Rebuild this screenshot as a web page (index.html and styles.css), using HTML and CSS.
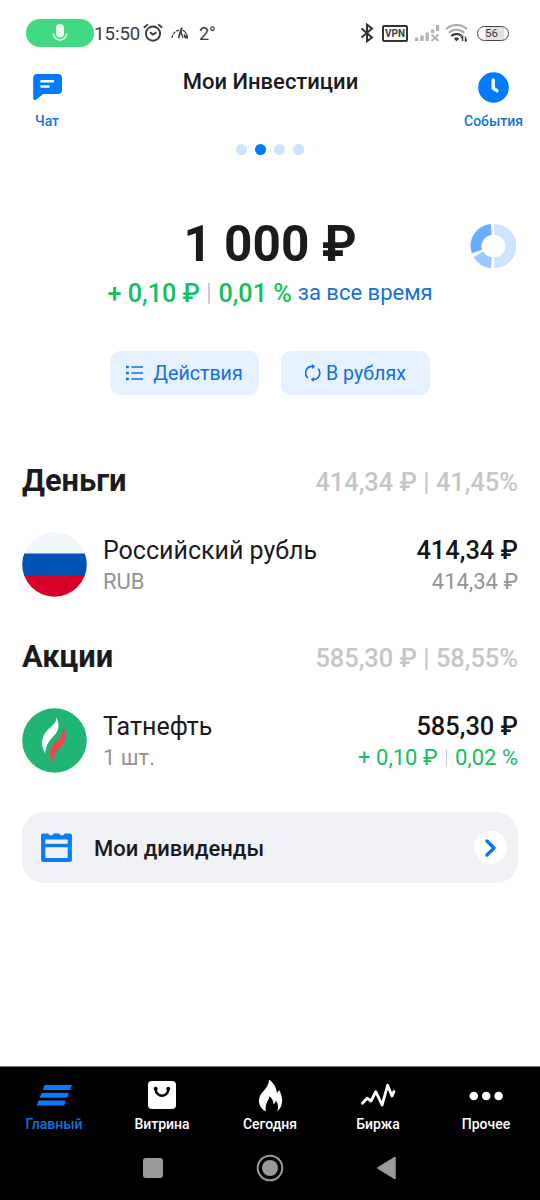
FILE: index.html
```html
<!DOCTYPE html>
<html lang="ru">
<head>
<meta charset="utf-8">
<title>Мои Инвестиции</title>
<link rel="stylesheet" href="styles.css">
</head>
<body>
<div class="screen">
  <div class="status">
    <div class="mic">
      <svg width="16" height="18" viewBox="0 0 16 18"><rect x="4" y="0" width="8" height="13.5" rx="4" fill="#e6f7ec"/><path d="M1.500 9.500a6.500 6.500 0 0 0 13 0" fill="none" stroke="#e6f7ec" stroke-width="1.600"/></svg>
    </div>
    <span class="time">15:50</span>
    <svg class="alarm" width="20" height="20" viewBox="0 0 20 20" fill="none" stroke="#3c3c3e" stroke-width="1.9"><circle cx="10" cy="10.6" r="7.1"/><path d="M.8 4.8 4.8 1.4M15.2 1.4l4 3.4M7 9.2l3 2.4 3.4-2.4"/></svg>
    <svg class="gauge" width="18" height="14" viewBox="0 0 18 14" fill="none" stroke="#3c3c3e"><path d="M1 12A9 9 0 0 1 8.500 4" stroke-width="1.300" stroke-dasharray="3 1"/><path d="M7.500 12 10.800 1.500" stroke-width="1.800"/><path d="M9.500 4.500 12 12M11.500 4c3 1.500 4.500 4 5 7.500" stroke-width="1.300"/><path d="M13 8.500l4 3.500h-3z" fill="#3c3c3e"/></svg>
    <span class="temp">2°</span>
    <svg class="bt" width="14" height="20" viewBox="0 0 14 20" fill="none" stroke="#333" stroke-width="2"><path d="M1.500 5.500 12 14.500 7 18.300V1.700L12 5.500 1.500 14.500"/></svg>
    <span class="vpn">VPN</span>
    <svg class="signal" width="25" height="17" viewBox="0 0 25 17" fill="#b4b4b4"><rect x="0" y="12.500" width="3.400" height="3.500"/><rect x="5.300" y="10.500" width="3.400" height="5.500"/><rect x="10.500" y="7.500" width="3.400" height="8.500"/><path d="M16 4.500h3.200v3.500H16zM21 0h3.200v6H21z"/><path d="M16.500 9.500l7 6.500m0-6.500l-7 6.500" stroke="#b4b4b4" stroke-width="2"/></svg>
    <svg class="wifi" width="24" height="18" viewBox="0 0 24 18" fill="none"><path d="M1 5.200a15.500 15.500 0 0 1 21 0" stroke="#aaa" stroke-width="2"/><path d="M3.700 8.800a11.300 11.300 0 0 1 15.600 0" stroke="#aaa" stroke-width="2"/><path d="M6.300 12a7.500 7.500 0 0 1 10.400 0" stroke="#333" stroke-width="2"/><path d="M8.800 14.500q2.700-2 5.400 0L11.500 17.300z" fill="#333"/><path d="M17.600 17v-4.500l-1.500 1.500M20.500 12.500V17l1.500-1.500" stroke="#333" stroke-width="1.300"/></svg>
    <span class="battery">56</span>
  </div>

  <header class="header">
    <a class="nav-action chat">
      <svg width="29" height="27" viewBox="0 0 29 27"><path d="M4 0h21a4 4 0 0 1 4 4v12a4 4 0 0 1-4 4H10l-6.500 5.400C1.700 26.400.2 26 .2 24V4A4 4 0 0 1 4 0z" fill="#007bff"/><path d="M8.500 7.200h11.500M8.500 12.500h7" stroke="#fff" stroke-width="2.500" stroke-linecap="round"/></svg>
      <span>Чат</span>
    </a>
    <h1 class="title"><span>Мои Инвестиции</span></h1>
    <a class="nav-action events">
      <svg width="31" height="31" viewBox="0 0 31 31"><circle cx="15.500" cy="15.500" r="15.300" fill="#007bff"/><path d="M15.200 8v8.300l3.700 2.300" fill="none" stroke="#fff" stroke-width="3.400" stroke-linecap="round" stroke-linejoin="round"/></svg>
      <span>События</span>
    </a>
  </header>
  <div class="dots"><i></i><i class="on"></i><i></i><i></i></div>

  <section class="summary">
    <div class="balance">1 000 ₽</div>
    <svg class="donut" width="46" height="46" viewBox="0 0 46 46" fill="none" stroke-width="11"><path d="M24.300 6.500a16.600 16.600 0 0 1 0 33.200" stroke="#cce4ff"/><path d="M21.300 39.700A16.600 16.600 0 0 1 8.500 31.300" stroke="#99caff"/><path d="M7 28.500A16.600 16.600 0 0 1 21.300 6.500" stroke="#66aeff"/></svg>
  </section>
  <div class="profit"><b class="p1">+ 0,10 ₽</b><i class="bar"></i><b class="p2">0,01 %</b><span>за все время</span></div>
  <div class="buttons">
    <button class="btn"><svg class="list" width="17" height="16" viewBox="0 0 17 16" stroke="#1272dd" stroke-width="1.700"><path d="M5.500 2H17M5.500 8H17M5.500 14H17"/><path d="M0 2h2.800M0 8h2.800M0 14h2.800" stroke-width="2.600"/></svg><span>Действия</span></button>
    <button class="btn"><svg class="cycle" width="16" height="18" viewBox="0 0 16 18" fill="none" stroke="#1272dd" stroke-width="1.600"><path d="M2.800 13.800A6.500 6.500 0 0 1 8 2.500M13.200 4.800A6.500 6.500 0 0 1 8 15.500"/><path d="M7 0l3.200 2.400-3 2.600zM9 13l-3.200 2.600 3 2.400z" fill="#1272dd" stroke="none"/></svg><span>В рублях</span></button>
  </div>

  <section class="group">
    <div class="group-head"><h2><span>Деньги</span></h2><span class="total">414,34 ₽ | 41,45%</span></div>
    <div class="asset">
      <svg width="65" height="65" viewBox="0 0 65 65"><defs><clipPath id="flag"><circle cx="32.500" cy="32.500" r="32.300"/></clipPath></defs><g clip-path="url(#flag)"><path d="M0 0h65v22H0z" fill="#f2f5f9"/><path d="M0 21.500h65v22H0z" fill="#0052b4"/><path d="M0 43h65v22H0z" fill="#d80027"/></g></svg>
      <div class="info"><span class="name">Российский рубль</span><span class="sub">RUB</span></div>
      <div class="values"><span class="value">414,34 ₽</span><span class="sub">414,34 ₽</span></div>
    </div>
  </section>
  <section class="group second">
    <div class="group-head"><h2><span>Акции</span></h2><span class="total">585,30 ₽ | 58,55%</span></div>
    <div class="asset">
      <svg width="65" height="65" viewBox="0 0 65 65"><circle cx="32.500" cy="32.500" r="32.300" fill="#20b574"/><path d="M34.200 9c6 12-1 17-5.500 22.500-3.500 4.200-5 8-5.500 14-4.500-8-4-15.500.8-21.500C29 17.500 35 16 34.200 9z" fill="#fff"/><path d="M41.300 19c5.500 9 2.200 16-4 22-4 4-6 8-6.500 14.500-5-9.500-3-15.500 1.700-20.500C38 29.500 42 26 41.300 19z" fill="#e8494c"/></svg>
      <div class="info"><span class="name">Татнефть</span><span class="sub">1 шт.</span></div>
      <div class="values"><span class="value">585,30 ₽</span><span class="sub gain"><span>+ 0,10 ₽</span><i class="bar"></i><span>0,02 %</span></span></div>
    </div>
  </section>

  <a class="dividends">
    <svg width="31" height="30" viewBox="0 0 31 30" fill="none"><path d="M2.200 6V27h26.600V6" stroke="#0a7cf5" stroke-width="4.200" stroke-linejoin="round"/><path d="M1 12.500h29" stroke="#0a7cf5" stroke-width="3.400"/><path d="M0 6.500V2.500Q0 .5 2 .5h5q.5 0 1 1 2 2 4 0 .5-1 1-1h5q.5 0 1 1 2 2 4 0 .5-1 1-1h5q2 0 2 2V6.500z" fill="#0a7cf5"/></svg>
    <span class="div-text">Мои дивиденды</span>
    <span class="go"><svg width="11" height="18" viewBox="0 0 11 18" fill="none" stroke="#0a78ea" stroke-width="3.500" stroke-linecap="round" stroke-linejoin="round"><path d="M2 2l7 7-7 7"/></svg></span>
  </a>

  <footer class="footer">
    <nav class="tabs">
      <a class="tab active"><svg width="36" height="34" viewBox="0 0 36 34" fill="#0a7bff"><path d="M8.500 7H36l-1.800 5H6.800zM5.500 14.800H33l-1.800 5H3.700zM2.500 22.600h27.500l-1.800 5H.7z"/></svg><span>Главный</span></a>
      <a class="tab"><svg width="36" height="34" viewBox="0 0 36 34"><rect x="4" y="3" width="28" height="28" rx="4" fill="#fff"/><path d="M11.500 11c1 9 12 9 13 0" fill="none" stroke="#000" stroke-width="2.400"/><circle cx="11.700" cy="10.700" r="2" /><circle cx="24.300" cy="10.700" r="2"/></svg><span>Витрина</span></a>
      <a class="tab"><svg width="36" height="34" viewBox="0 0 36 34"><path d="M17 1.500C21 4.500 24.500 9 24.800 14.800 26.200 14 26.800 13 27 11.800 31 19 32 28 25.200 33.600 27 29 25.800 25 23.800 22.500 23.600 24.500 22.800 25.500 21.500 26 21.300 22.500 19.500 19.800 17.300 18.300 17.500 22.500 12.500 24.500 13.800 33.600 7 29.500 5 22.500 8.800 16.500 11.500 12 16.800 9.500 17 1.500z" fill="#fff"/></svg><span>Сегодня</span></a>
      <a class="tab"><svg width="36" height="34" viewBox="0 0 36 34" fill="none" stroke="#fff" stroke-width="2.800" stroke-linejoin="round" stroke-linecap="round"><path d="M2.500 25.200l4.500-5 4 2.800 4.800-9.300 6.300 13.300L27.600 7.300 32 18l2-4.500"/></svg><span>Биржа</span></a>
      <a class="tab"><svg width="36" height="34" viewBox="0 0 36 34" fill="#fff"><circle cx="5.800" cy="18" r="4.300"/><circle cx="18.200" cy="18" r="4.300"/><circle cx="30.600" cy="18" r="4.300"/></svg><span>Прочее</span></a>
    </nav>
    <div class="system">
      <svg width="20" height="20" viewBox="0 0 20 20"><rect width="20" height="20" rx="3" fill="#999"/></svg>
      <svg width="28" height="28" viewBox="0 0 28 28"><circle cx="14" cy="14" r="12.300" fill="none" stroke="#999" stroke-width="2"/><circle cx="14" cy="14" r="8" fill="#999"/></svg>
      <svg width="20" height="24" viewBox="0 0 20 24"><path d="M1 12 18 1.500v21z" fill="#999" stroke="#999" stroke-width="1.500" stroke-linejoin="round"/></svg>
    </div>
  </footer>
</div>
</body>
</html>
```
FILE: styles.css
```css
* { box-sizing: border-box; }
body { margin: 0; background: #fff; font-family: Roboto, "Noto Sans", sans-serif; color: #1b1b1d; }
svg { display: block; flex: none; }
span, b { white-space: nowrap; }
h1, h2 { margin: 0; }
.screen { width: 540px; height: 1200px; display: flex; flex-direction: column; overflow: hidden; }

.status { height: 66px; flex: none; display: flex; align-items: center; padding-left: 26px; color: #3c3c3e; }
.mic { width: 68px; height: 28px; border-radius: 14px; background: #40d980; display: grid; place-items: center; }
.time { width: 47px; font-size: 18.600px; padding-top: 2px; }
.alarm { margin-left: 2px; }
.gauge { margin-left: 8px; }
.temp { width: 18px; margin-left: 10px; font-size: 18px; }
.bt { margin-left: 143px; }
.vpn { margin-left: 8px; width: 26px; height: 17px; border: 2px solid #333; border-radius: 2px; font-size: 10px; font-weight: 700; line-height: 14px; text-align: center; }
.signal { margin-left: 7px; }
.wifi { margin-left: 5px; }
.battery { margin-left: 8px; width: 32px; height: 15px; border: 1.5px solid #444; border-radius: 8px; background: linear-gradient(90deg, #fff 22%, #e2e2e2 22% 86%, #fff 86%); font-size: 11.500px; line-height: 13px; text-align: center; padding-right: 3px; }

.header { height: 72px; flex: none; display: flex; justify-content: space-between; align-items: flex-start; }
.nav-action { display: flex; flex-direction: column; align-items: center; color: #1272dd; font-size: 14px; font-weight: 500; line-height: 18px; width: 94px; }
.chat { padding-top: 8px; gap: 11px; }
.events { width: 93px; padding-top: 6px; gap: 9px; }
.title { font-size: 22px; font-weight: 500; line-height: 32px; }
.dots { height: 22px; flex: none; display: flex; justify-content: center; align-items: center; gap: 8.200px; }
.dots i { width: 11px; height: 11px; border-radius: 50%; background: #cce4ff; }
.dots .on { background: #007bff; }

.summary { height: 114px; flex: none; display: grid; grid-template-columns: 1fr 346px 1fr; padding-top: 54px; }
.balance { grid-column: 2; text-align: center; font-size: 49.500px; font-weight: 700; line-height: 60px; white-space: nowrap; }
.donut { justify-self: end; margin: 9px 24px 0 0; }
.profit { height: 38px; flex: none; display: flex; align-items: center; padding-left: 107.500px; color: #1272dd; font-size: 22px; }
.profit b { color: #11c15d; font-size: 25.200px; font-weight: 500; }
.bar { width: 1.500px; height: 21px; background: #ccc; margin: 0 8.500px; }
.profit .p2 { margin-right: 6px; }
.profit > span { padding-bottom: 2px; }
.buttons { margin-top: 38.500px; flex: none; display: flex; justify-content: center; gap: 22px; }
.btn { width: 149px; height: 44px; border: 0; border-radius: 10px; background: #e5f1ff; color: #1272dd; font: 400 19.600px Roboto, sans-serif; display: flex; align-items: center; justify-content: center; padding: 0; }
.btn span { padding-top: 1px; }
.list { margin-right: 10px; }
.cycle { margin-right: 5px; }

.group { margin-top: 65.500px; flex: none; padding: 0 22px; }
.group.second { margin-top: 39px; }
.group-head { display: flex; justify-content: space-between; align-items: center; height: 40px; }
.group-head h2 { font-size: 30.800px; font-weight: 700; }
.total { color: #c6c6c6; font-size: 25.400px; font-weight: 500; padding-top: 4px; }
.asset { height: 65px; margin-top: 32px; display: flex; }
.info { margin-left: 16px; display: flex; flex-direction: column; align-items: flex-start; }
.values { margin-left: auto; display: flex; flex-direction: column; align-items: flex-end; }
.name, .value { line-height: 36px; height: 34px; }
.name { font-size: 25px; line-height: 37px; }
.value { font-size: 25.400px; font-weight: 500; color: #151517; }
.sub { font-size: 22px; line-height: 31px; color: #949494; }
.gain { color: #11c15d; display: flex; align-items: center; }
.gain .bar { margin: 0 8px; height: 18px; }

.dividends { margin: 39px 22px 0; height: 71px; flex: none; border-radius: 22px; background: #f0f1f5; display: flex; align-items: center; padding: 0 11px 0 19px; }
.div-text { margin-left: 22px; padding-top: 1px; font-size: 22px; font-weight: 500; }
.go { width: 33px; height: 33px; border-radius: 50%; background: #fff; margin-left: auto; display: grid; place-items: center; }

.footer { margin-top: auto; height: 134px; flex: none; background: #000; border-top: 1px solid #777; }
.tabs { display: grid; grid-template-columns: repeat(5, 1fr); padding-top: 11px; height: 83px; }
.tab { display: flex; flex-direction: column; align-items: center; gap: 3px; color: #fff; font-size: 14px; font-weight: 500; line-height: 18px; }
.active { color: #1272dd; }
.system { height: 36px; display: grid; grid-template-columns: repeat(3, 117px); justify-content: center; align-items: center; justify-items: center; }
```
